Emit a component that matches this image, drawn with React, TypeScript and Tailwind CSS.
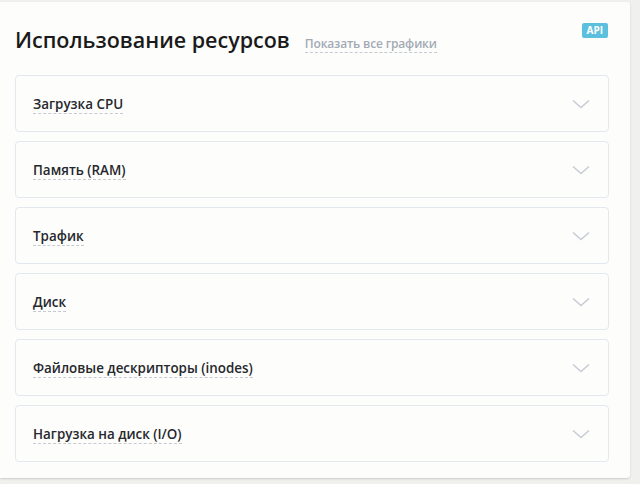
import React from "react";

const items = [
  "Загрузка CPU",
  "Память (RAM)",
  "Трафик",
  "Диск",
  "Файловые дескрипторы (inodes)",
  "Нагрузка на диск (I/O)",
];

function Chevron() {
  return (
    <svg width="18" height="10" viewBox="0 0 18 10" fill="none">
      <path d="M1 1.5 L9 8.5 L17 1.5" stroke="#c9ccd6" strokeWidth="1.6" />
    </svg>
  );
}

export default function App() {
  return (
    <div
      className="w-[640px] h-[484px] bg-[#f0f0ef] overflow-hidden pt-[2px]"
      style={{ fontFamily: '"Open Sans", "Noto Sans", sans-serif' }}
    >
      <div className="w-[630px] h-[476px] bg-[#fdfdfc] rounded-r-[3px] shadow-[0_1px_2px_rgba(0,0,0,0.15)] px-[15px] pt-[23px]">
        <div className="flex items-start justify-between h-[50px]">
          <div className="flex items-baseline">
            <h1 className="text-[21.5px] leading-[29px] font-semibold text-[#1a1a1a]">
              Использование ресурсов
            </h1>
            <span className="ml-[15px] text-[12px] font-semibold text-[#a3aab5] border-b border-dashed border-[#c5cad2] leading-[16px] tracking-[-0.15px]">
              Показать все графики
            </span>
          </div>
          <span className="mr-[7px] mt-[-2px] bg-[#5bc0de] text-white text-[10px] font-bold leading-[15px] px-[5px] rounded-[2px]">
            API
          </span>
        </div>
        <div className="flex flex-col gap-[9px] w-[594px]">
          {items.map((t) => (
            <div
              key={t}
              className="h-[57px] border border-[#e3e8ee] rounded-[4px] bg-[#fdfdfc] flex items-center justify-between pl-[17px] pr-[18px]"
            >
              <span className="text-[13.4px] font-semibold text-[#26282c] leading-[18px] border-b border-dashed border-[#c5cad2] mt-[2px]">
                {t}
              </span>
              <Chevron />
            </div>
          ))}
        </div>
      </div>
    </div>
  );
}
